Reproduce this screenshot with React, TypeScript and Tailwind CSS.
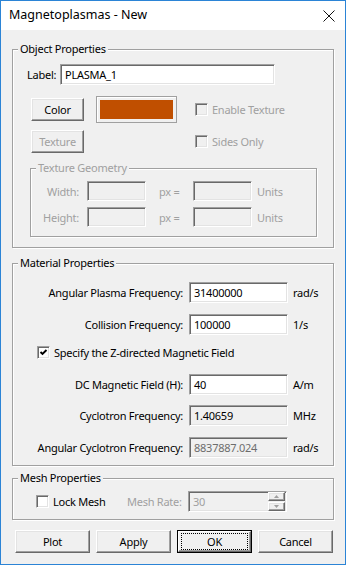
import React from "react";

const sunken =
  "border border-t-[#a0a0a0] border-l-[#a0a0a0] border-b-white border-r-white shadow-[inset_1px_1px_0_#696969,inset_-1px_-1px_0_#e3e3e3]";
const raised =
  "border border-t-white border-l-white border-b-[#696969] border-r-[#696969] shadow-[inset_-1px_-1px_0_#a0a0a0,inset_1px_1px_0_#e3e3e3]";
const groupBox =
  "relative border border-[#a0a0a0] shadow-[inset_1px_1px_0_#ffffff,1px_1px_0_#ffffff]";

function Legend({ children, disabled }: { children: React.ReactNode; disabled?: boolean }) {
  return (
    <span
      className={
        "absolute left-[5px] top-[-9px] h-[16px] leading-[16px] px-[2px] bg-[#f0f0f0] whitespace-nowrap " +
        (disabled ? "text-[#a0a0a0]" : "text-black")
      }
    >
      {children}
    </span>
  );
}

function CheckBox({ checked, disabled }: { checked?: boolean; disabled?: boolean }) {
  return (
    <div
      className={
        "w-[13px] h-[13px] shrink-0 flex items-center justify-center " +
        sunken +
        (disabled ? " bg-[#f0f0f0]" : " bg-white")
      }
    >
      {checked && (
        <svg width="9" height="9" viewBox="0 0 9 9">
          <path d="M1.5 4 L3.5 6 L7.5 2" stroke="#000" strokeWidth="1.9" fill="none" />
        </svg>
      )}
    </div>
  );
}

function Btn({
  children,
  className,
  disabled,
}: {
  children: React.ReactNode;
  className: string;
  disabled?: boolean;
}) {
  return (
    <div
      className={
        "h-[23px] flex items-center justify-center bg-[#f0f0f0] " +
        raised +
        " " +
        className +
        (disabled ? " text-[#a0a0a0]" : " text-black")
      }
    >
      {children}
    </div>
  );
}

export default function App() {
  return (
    <div className="w-[346px] h-[565px] border border-[#2b84d6] bg-[#f0f0f0] flex flex-col font-['Noto_Sans',sans-serif] text-[11px] tracking-[-0.25px] text-black leading-none select-none">
      {/* Title bar */}
      <div className="h-[29px] bg-white flex items-center justify-between pl-[8px] pr-[10px]">
        <span className="text-[12.5px] tracking-[0px] text-black">Magnetoplasmas - New</span>
        <svg width="12" height="12" viewBox="0 0 12 12" className="mt-[1px]">
          <path d="M0.5 0.5 L11.5 11.5 M11.5 0.5 L0.5 11.5" stroke="#111" strokeWidth="1" />
        </svg>
      </div>

      {/* Body */}
      <div className="flex-1 flex flex-col px-[11px] pt-[19px]">
        {/* Object Properties */}
        <div className={groupBox + " h-[199px] flex flex-col"}>
          <Legend>Object Properties</Legend>
          <div className="mt-[14px] ml-[14px] flex items-center">
            <span className="w-[33px]">Label:</span>
            <div className={sunken + " w-[215px] h-[21px] bg-white flex items-center pl-[4px]"}>PLASMA_1</div>
          </div>
          <div className="mt-[11px] ml-[18px] flex items-center h-[27px]">
            <Btn className="w-[53px]">Color</Btn>
            <div className="ml-[12px] w-[81px] h-[27px] border border-[#a0a0a0] bg-[#f0f0f0] p-[3px] shadow-[inset_1px_1px_0_#ffffff]">
              <div className="w-full h-full bg-[#c04f00]" />
            </div>
            <div className="ml-[18px] flex items-center gap-[4px] text-[#a0a0a0]">
              <CheckBox disabled />
              <span>Enable Texture</span>
            </div>
          </div>
          <div className="mt-[7px] ml-[18px] flex items-center h-[23px]">
            <Btn className="w-[53px]" disabled>
              Texture
            </Btn>
            <div className="ml-[111px] flex items-center gap-[4px] text-[#a0a0a0]">
              <CheckBox disabled />
              <span>Sides Only</span>
            </div>
          </div>
          {/* Texture Geometry */}
          <div className={groupBox + " mt-[15px] ml-[17px] w-[287px] h-[69px] flex flex-col text-[#a0a0a0]"}>
            <Legend disabled>Texture Geometry</Legend>
            <div className="mt-[12px] flex flex-col gap-[6px]">
              {["Width:", "Height:"].map((l) => (
                <div key={l} className="flex items-center h-[20px]">
                  <span className="w-[48px] text-right">{l}</span>
                  <div className={sunken + " ml-[8px] w-[59px] h-[20px] bg-[#f0f0f0]"} />
                  <span className="ml-[13px] w-[34px]">px =</span>
                  <div className={sunken + " w-[59px] h-[20px] bg-[#f0f0f0]"} />
                  <span className="ml-[5px]">Units</span>
                </div>
              ))}
            </div>
          </div>
        </div>

        {/* Material Properties */}
        <div className={groupBox + " mt-[15px] h-[203px] flex flex-col"}>
          <Legend>Material Properties</Legend>
          <div className="mt-[18px] flex items-center h-[21px]">
            <span className="w-[170px] text-right">Angular Plasma Frequency:</span>
            <div className={sunken + " ml-[6px] w-[99px] h-[21px] bg-white flex items-center pl-[4px]"}>31400000</div>
            <span className="ml-[5px]">rad/s</span>
          </div>
          <div className="mt-[11px] flex items-center h-[21px]">
            <span className="w-[170px] text-right">Collision Frequency:</span>
            <div className={sunken + " ml-[6px] w-[99px] h-[21px] bg-white flex items-center pl-[4px]"}>100000</div>
            <span className="ml-[5px]">1/s</span>
          </div>
          <div className="mt-[11px] ml-[24px] flex items-center gap-[4px] h-[13px]">
            <CheckBox checked />
            <span>Specify the Z-directed Magnetic Field</span>
          </div>
          <div className="mt-[15px] flex items-center h-[21px]">
            <span className="w-[170px] text-right">DC Magnetic Field (H):</span>
            <div className={sunken + " ml-[6px] w-[99px] h-[21px] bg-white flex items-center pl-[4px]"}>40</div>
            <span className="ml-[5px]">A/m</span>
          </div>
          <div className="mt-[10px] flex items-center h-[21px]">
            <span className="w-[170px] text-right">Cyclotron Frequency:</span>
            <div className={sunken + " ml-[6px] w-[99px] h-[21px] bg-[#f0f0f0] flex items-center pl-[4px]"}>1.40659</div>
            <span className="ml-[5px]">MHz</span>
          </div>
          <div className="mt-[11px] flex items-center h-[21px]">
            <span className="w-[170px] text-right">Angular Cyclotron Frequency:</span>
            <div className={sunken + " ml-[6px] w-[99px] h-[21px] bg-[#f0f0f0] flex items-center pl-[4px] text-[#6d6d6d]"}>
              8837887.024
            </div>
            <span className="ml-[5px]">rad/s</span>
          </div>
        </div>

        {/* Mesh Properties */}
        <div className={groupBox + " mt-[12px] h-[42px] flex flex-col"}>
          <Legend>Mesh Properties</Legend>
          <div className="mt-[12px] ml-[23px] flex items-center h-[21px]">
            <div className="w-[91px] flex items-center gap-[4px]">
              <CheckBox />
              <span>Lock Mesh</span>
            </div>
            <span className="w-[61px] text-[#a0a0a0]">Mesh Rate:</span>
            <div className={sunken + " w-[99px] h-[21px] bg-[#f0f0f0] flex items-center justify-between pl-[4px] pr-[1px] text-[#a0a0a0]"}>
              <span>30</span>
              <div className="flex flex-col gap-[1px]">
                <div className={raised + " w-[17px] h-[9px] bg-[#f0f0f0] flex items-center justify-center"}>
                  <svg width="5" height="3" viewBox="0 0 5 3">
                    <path d="M2.5 0 L5 3 L0 3 Z" fill="#a0a0a0" />
                  </svg>
                </div>
                <div className={raised + " w-[17px] h-[9px] bg-[#f0f0f0] flex items-center justify-center"}>
                  <svg width="5" height="3" viewBox="0 0 5 3">
                    <path d="M0 0 L5 0 L2.5 3 Z" fill="#a0a0a0" />
                  </svg>
                </div>
              </div>
            </div>
          </div>
        </div>

        {/* Buttons */}
        <div className="mt-[10px] ml-[3px] flex gap-[6px]">
          <Btn className="w-[75px]">Plot</Btn>
          <Btn className="w-[75px]">Apply</Btn>
          <div className="w-[75px] h-[23px] border border-black bg-[#f0f0f0] flex">
            <div className="flex-1 flex border border-t-white border-l-white border-b-[#696969] border-r-[#696969] shadow-[inset_-1px_-1px_0_#a0a0a0]">
              <div className="flex-1 m-[1px] ml-[2px] mr-[2px] border border-dotted border-black flex items-center justify-center">
                OK
              </div>
            </div>
          </div>
          <Btn className="w-[75px]">Cancel</Btn>
        </div>
      </div>
    </div>
  );
}
